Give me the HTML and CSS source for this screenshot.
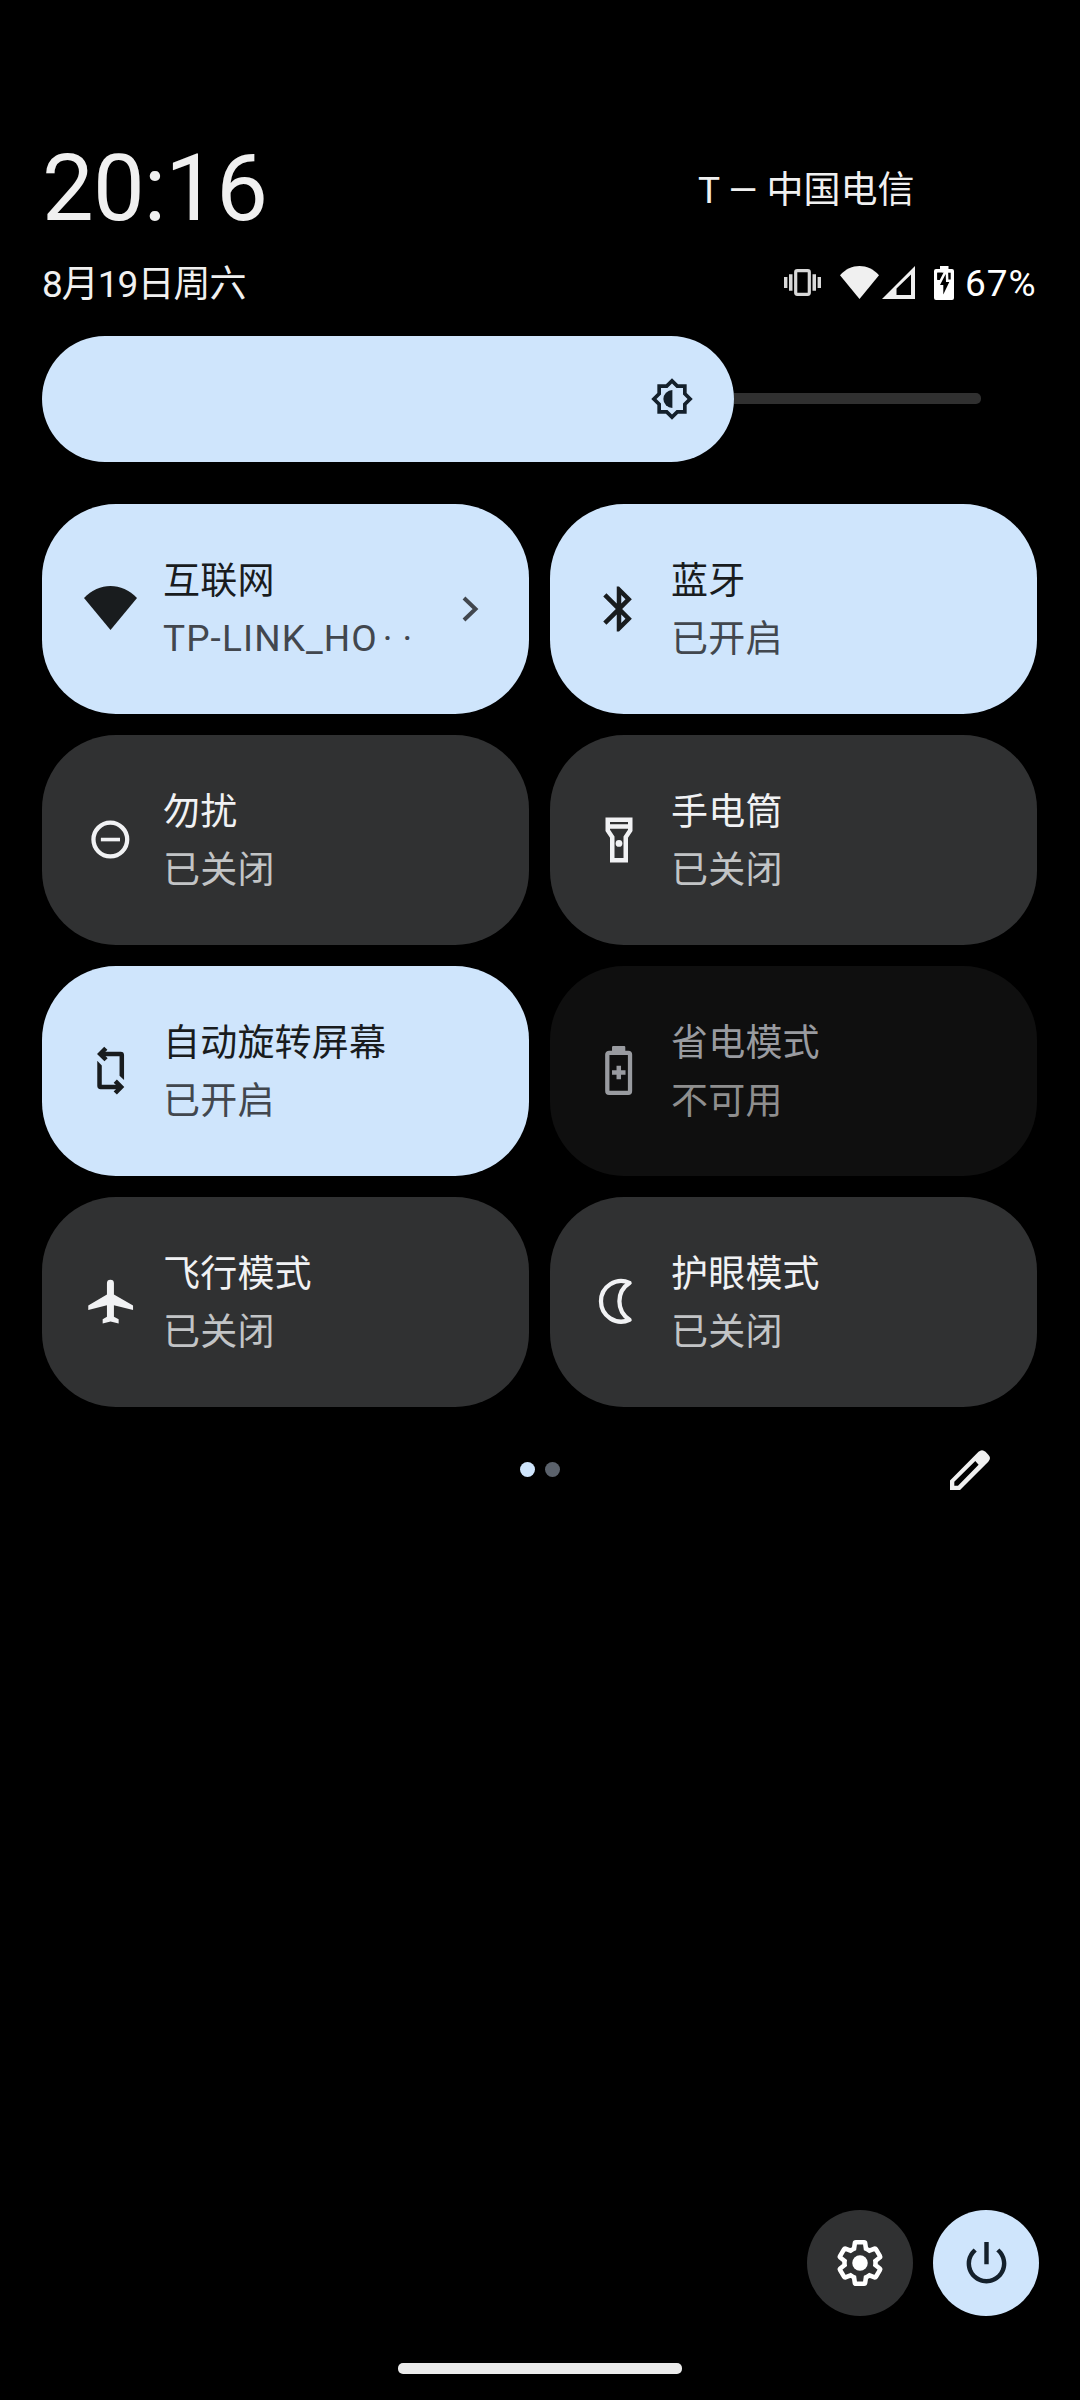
FILE: index.html
```html
<!DOCTYPE html>
<html lang="zh-CN">
<head>
    <meta charset="UTF-8">
    <title>快捷设置</title>
    <link rel="stylesheet" href="styles.css">
</head>
<body>
    <div class="panel">
        <header class="header">
            <div class="header-row">
                <div class="clock">20:16</div>
                <div class="carrier">T — 中国电信</div>
            </div>
            <div class="header-row status-row">
                <div class="date">8月19日周六</div>
                <div class="status-icons">
                    <svg class="vibrate" width="37" height="27" viewBox="0 0 37 27">
                        <rect x="11.7" y="1.7" width="13.6" height="23.6" rx="1.5" fill="none" stroke="currentColor" stroke-width="3.2"/>
                        <path d="M0 8h3.4v11H0zM5 5.300h3.500v16.400H5zM28.500 5.300H32v16.400h-3.500zM33.600 8H37v11h-3.400z"/>
                    </svg>
                    <svg class="wifi" width="39" height="33" viewBox="0 0 39 33">
                        <path d="M0 9.200C11-3 28-3 39 9.200L19.500 33z"/>
                    </svg>
                    <svg class="signal" width="33" height="33" viewBox="0 0 33 33">
                        <path fill-rule="evenodd" d="M33 0v33H0zM29 8.500L14.500 22.500v6.500H29z"/>
                    </svg>
                    <svg class="battery" width="20" height="34" viewBox="0 0 20 34">
                        <path d="M6 0h8.500v3H18a2 2 0 0 1 2 2v27a2 2 0 0 1-2 2H2a2 2 0 0 1-2-2V5a2 2 0 0 1 2-2h4z"/>
                        <path fill="#000" d="M3.300 6.700h13.400V14H3.300z"/>
                        <path fill="#000" stroke="#fff" stroke-width="5" paint-order="stroke" d="M11.700 8L6 19h3.300v9.500l6-12.500H12z"/>
                        <path fill="#000" d="M3.300 6.700h5L3.300 14z"/>
                    </svg>
                    <span class="percent">67%</span>
                </div>
            </div>
        </header>

        <div class="brightness">
            <div class="brightness-fill">
                <svg width="44" height="44" viewBox="0 0 24 24">
                    <path fill-rule="evenodd" d="M20 15.310L23.310 12 20 8.690V4h-4.690L12 .690 8.690 4H4v4.690L.690 12 4 15.310V20h4.690L12 23.310 15.310 20H20zM18 14.480V18h-3.520L12 20.480 9.520 18H6v-3.520L3.520 12 6 9.520V6h3.520L12 3.520 14.480 6H18v3.520L20.480 12z"/>
                    <path d="M12.200 7.100v9.800a4.900 4.900 0 0 1 0-9.800z"/>
                </svg>
            </div>
            <div class="brightness-track"></div>
        </div>

        <main class="tiles">
            <div class="tile on">
                <svg class="tile-icon" viewBox="0 0 54 54">
                    <path d="M0 16C15 0 38 0 53 16L26.500 48z"/>
                </svg>
                <div class="tile-text">
                    <div class="title">互联网</div>
                    <div class="sub ssid">TP-LINK_HO<span class="cut">··</span></div>
                </div>
                <svg class="chevron" width="17" height="26" viewBox="0 0 17 26">
                    <path d="M2 2l11.500 11L2 24" fill="none" stroke="currentColor" stroke-width="4"/>
                </svg>
            </div>

            <div class="tile on">
                <svg class="tile-icon" viewBox="0 0 24 24">
                    <path d="M17.710 7.710L12 2h-1v7.590L6.410 5 5 6.410 10.590 12 5 17.590 6.410 19 11 14.410V22h1l5.710-5.710-4.300-4.290 4.300-4.290zM13 5.830l1.880 1.880L13 9.590V5.830zm1.880 10.460L13 18.170v-3.760l1.880 1.880z"/>
                </svg>
                <div class="tile-text">
                    <div class="title">蓝牙</div>
                    <div class="sub">已开启</div>
                </div>
            </div>

            <div class="tile">
                <svg class="tile-icon" viewBox="0 0 24 24">
                    <circle cx="11.700" cy="11.800" r="7.500" fill="none" stroke="currentColor" stroke-width="1.900"/>
                    <path d="M7.500 11h8.500v1.600H7.500z"/>
                </svg>
                <div class="tile-text">
                    <div class="title">勿扰</div>
                    <div class="sub">已关闭</div>
                </div>
            </div>

            <div class="tile">
                <svg class="tile-icon" viewBox="0 0 24 24">
                    <path fill-rule="evenodd" d="M6 2v6l2 3v11h8V11l2-3V2zM16 4v1H8V4zM14 10.400V20h-4v-9.610l-2-3V7h8v.390z"/>
                    <circle cx="12" cy="13.500" r="1.500"/>
                </svg>
                <div class="tile-text">
                    <div class="title">手电筒</div>
                    <div class="sub">已关闭</div>
                </div>
            </div>

            <div class="tile on">
                <svg class="tile-icon" viewBox="0 0 24 24">
                    <path d="M8 3.400h8.300a1.500 1.500 0 0 1 1.500 1.500V16l-2-1.900V5.400H8zM15.800 20.100H7.400a1.500 1.500 0 0 1-1.500-1.500V7.400l2 2.100v8.600h7.900z"/>
                    <path d="M9.700 1.900L7.200 4.400l2.600 2.600M13.900 16.500l2.600 2.600-2.600 2.700" fill="none" stroke="currentColor" stroke-width="2"/>
                </svg>
                <div class="tile-text">
                    <div class="title">自动旋转屏幕</div>
                    <div class="sub">已开启</div>
                </div>
            </div>

            <div class="tile disabled">
                <svg class="tile-icon" viewBox="0 0 24 24">
                    <rect x="6.800" y="3.900" width="10.100" height="17.800" rx=".800" fill="none" stroke="currentColor" stroke-width="1.900"/>
                    <path d="M8.900 1.400a.500.500 0 0 1 .500-.500h4.900a.500.500 0 0 1 .500.500V4H8.900zM10.900 9.700h2v2h2v2h-2v2h-2v-2h-2v-2h2z"/>
                </svg>
                <div class="tile-text">
                    <div class="title">省电模式</div>
                    <div class="sub">不可用</div>
                </div>
            </div>

            <div class="tile">
                <svg class="tile-icon" viewBox="0 0 24 24">
                    <path d="M21.800 15.600v-2.100L13.300 8.700V3.700a1.550 1.550 0 0 0-3.100 0v5L1.900 13.500v2.100l8.300-2.200v5.200l-1.900 1.100v1.900l3.500-.9 3.600.9v-1.900l-2.100-1.100v-5.200z"/>
                </svg>
                <div class="tile-text">
                    <div class="title">飞行模式</div>
                    <div class="sub">已关闭</div>
                </div>
            </div>

            <div class="tile">
                <svg class="tile-icon" viewBox="0 0 24 24">
                    <path d="M16.700 3.500A9 9 0 1 0 16.700 19.900A9.700 9.700 0 0 1 16.700 3.500z" fill="none" stroke="currentColor" stroke-width="1.900" stroke-linejoin="round"/>
                </svg>
                <div class="tile-text">
                    <div class="title">护眼模式</div>
                    <div class="sub">已关闭</div>
                </div>
            </div>
        </main>

        <div class="pager">
            <div class="dots">
                <span class="dot active"></span>
                <span class="dot"></span>
            </div>
            <svg class="edit" width="40" height="40" viewBox="0 0 40 40">
                <path fill-rule="evenodd" d="M0 40v-9.500L28.500 1.800q3.500-3.200 7 0L38.300 4.700q3.400 3.300 0 7L10 40zM4.300 31.800V35.700H8L28.600 14.700 25.300 11z"/>
            </svg>
        </div>

        <footer class="footer">
            <div class="round">
                <svg width="54" height="54" viewBox="0 0 24 24">
                    <g transform="translate(12 12) scale(.92) translate(-12 -12)">
                        <path fill="none" stroke="currentColor" stroke-width="2.200" d="M19.430 12.980c.040-.320.070-.640.070-.980 0-.340-.030-.660-.070-.980l2.110-1.650c.190-.150.240-.420.120-.640l-2-3.460c-.090-.160-.260-.250-.440-.250-.060 0-.120.010-.170.030l-2.490 1c-.520-.400-1.080-.730-1.690-.980l-.380-2.650C14.460 2.180 14.250 2 14 2h-4c-.250 0-.460.180-.490.420l-.380 2.650c-.610.250-1.170.590-1.690.980l-2.490-1c-.060-.020-.120-.030-.180-.030-.170 0-.340.090-.430.250l-2 3.460c-.130.220-.070.490.120.640l2.110 1.650c-.040.320-.070.650-.070.980 0 .330.030.660.070.980l-2.110 1.650c-.190.150-.240.420-.120.640l2 3.460c.090.160.260.250.440.250.060 0 .120-.010.170-.030l2.490-1c.520.400 1.080.730 1.690.980l.380 2.650c.030.240.240.420.490.420h4c.250 0 .460-.180.490-.420l.380-2.650c.610-.250 1.170-.590 1.690-.980l2.490 1c.060.020.120.030.180.030.170 0 .340-.090.430-.250l2-3.460c.120-.220.070-.490-.120-.640z"/>
                    </g>
                    <circle cx="12" cy="12" r="3.450"/>
                </svg>
            </div>
            <div class="round power">
                <svg width="53" height="53" viewBox="0 0 24 24">
                    <path d="M13 2.300h-2v10h2zM17.830 5.170l-1.420 1.420C17.990 7.860 19 9.810 19 12c0 3.870-3.130 7-7 7s-7-3.130-7-7c0-2.190 1.010-4.140 2.580-5.420L6.170 5.170C4.230 6.820 3 9.260 3 12c0 4.970 4.030 9 9 9s9-4.030 9-9c0-2.740-1.230-5.180-3.170-6.830z"/>
                </svg>
            </div>
        </footer>

        <div class="nav-handle"></div>
    </div>
</body>
</html>
```

FILE: styles.css
```css
body {
    margin: 0;
    background-color: #000;
    color: #f0f0f0;
    font-family: Roboto, "Noto Sans CJK SC", sans-serif;
    font-size: 37px;
}
svg {
    display: block;
    flex: none;
    fill: currentColor;
}
.panel {
    display: flex;
    flex-direction: column;
    width: 1080px;
    height: 2400px;
    padding: 138px 42px 26px;
    box-sizing: border-box;
}
.header {
    height: 198px;
}
.header-row {
    display: flex;
    justify-content: space-between;
    align-items: center;
    height: 98px;
}
.clock {
    padding-top: 4px;
    font-size: 92px;
    line-height: 98px;
    letter-spacing: -0.8px;
}
.carrier {
    width: 340px;
    white-space: nowrap;
}
.status-row {
    height: 93px;
}
.date {
    padding-bottom: 4px;
    letter-spacing: -1px;
}
.status-icons {
    display: flex;
    align-items: center;
}
.vibrate {
    margin-right: 19px;
    color: #d8d8d8;
}
.wifi {
    margin-right: 3px;
}
.signal {
    margin-right: 19px;
}
.battery {
    margin-right: 11px;
    color: #fff;
}
.percent {
    width: 73px;
    padding-top: 1px;
    color: #fff;
    letter-spacing: 1px;
}

.brightness {
    display: flex;
    align-items: center;
    height: 126px;
    margin-bottom: 42px;
}
.brightness-fill {
    display: flex;
    align-items: center;
    justify-content: flex-end;
    width: 692px;
    height: 126px;
    padding-right: 40px;
    box-sizing: border-box;
    border-radius: 63px;
    background-color: #cfe5fc;
    color: #14202b;
}
.brightness-track {
    width: 247px;
    height: 11px;
    margin-bottom: 1px;
    border-radius: 0 5px 5px 0;
    background-color: #303030;
}

.tiles {
    display: grid;
    grid-template-columns: 487px 487px;
    grid-auto-rows: 210px;
    gap: 21px;
}
.tile {
    display: flex;
    align-items: center;
    padding: 0 50px 0 42px;
    border-radius: 74px;
    background-color: #303132;
    color: #f1f2f4;
}
.tile .sub {
    color: #c2c4c6;
}
.tile.on {
    background-color: #cfe5fc;
    color: #191c1e;
}
.tile.on .sub,
.chevron {
    color: #42474e;
}
.tile.disabled {
    background-color: #0f0f0f;
    color: #999ba0;
}
.tile.disabled .sub {
    color: #8e8e8e;
}
.tile-icon {
    width: 54px;
    height: 54px;
    margin-right: 25px;
}
.tile-text {
    flex: 1;
    padding-top: 4px;
    line-height: 58px;
    letter-spacing: 0.2px;
    white-space: nowrap;
}
.tile-text .ssid {
    height: 58px;
    line-height: 55px;
    letter-spacing: 1.1px;
}
.cut {
    margin-left: 5px;
    letter-spacing: 10px;
}

.pager {
    display: flex;
    align-items: center;
    justify-content: flex-end;
    height: 125px;
    padding-right: 48px;
}
.dots {
    display: flex;
    gap: 10px;
    margin-right: 390px;
}
.dot {
    width: 15px;
    height: 15px;
    border-radius: 50%;
    background-color: #5b626c;
}
.dot.active {
    background-color: #cfe5fc;
}

.footer {
    display: flex;
    justify-content: flex-end;
    gap: 20px;
    margin: auto -1px 47px 0;
}
.round {
    display: flex;
    align-items: center;
    justify-content: center;
    width: 106px;
    height: 106px;
    border-radius: 50%;
    background-color: #303132;
    color: #fff;
}
.round.power {
    background-color: #cfe5fc;
    color: #14202b;
}
.nav-handle {
    align-self: center;
    width: 284px;
    height: 11px;
    border-radius: 5px;
    background-color: #ebebeb;
}
```
